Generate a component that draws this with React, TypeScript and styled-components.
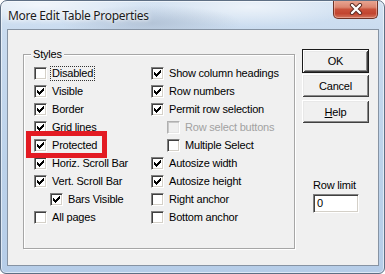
import React from "react";
import styled, { createGlobalStyle, css } from "styled-components";

const GlobalStyle = createGlobalStyle`
  html, body { margin: 0; padding: 0; background: #ffffff; }
  * { box-sizing: border-box; }
`;

const Window = styled.div`
  width: 385px;
  height: 274px;
  border: 1px solid #5e6f84;
  border-radius: 7px 7px 6px 6px;
  background:
    radial-gradient(ellipse 90px 18px at 150px 22px, rgba(160, 175, 195, 0.55), rgba(160, 175, 195, 0) 100%),
    radial-gradient(ellipse 120px 20px at 40px 4px, rgba(255, 255, 255, 0.7), rgba(255, 255, 255, 0) 100%),
    radial-gradient(ellipse 110px 20px at 250px 6px, rgba(255, 255, 255, 0.6), rgba(255, 255, 255, 0) 100%),
    linear-gradient(180deg, #d3e2f2 0%, #c9dbef 12%, #bcd2ea 60%, #b6cde8 100%);
  box-shadow: inset 0 0 0 1px rgba(255, 255, 255, 0.55);
  display: flex;
  flex-direction: column;
  overflow: hidden;
  font-family: "Liberation Sans", Arial, sans-serif;
`;

const TitleBar = styled.div`
  height: 28px;
  display: flex;
  align-items: flex-start;
  padding: 0 6px 0 7px;
`;

const Title = styled.div`
  font-family: "Noto Sans", "Open Sans", sans-serif;
  font-size: 12px;
  letter-spacing: -0.3px;
  line-height: 16px;
  margin-top: 7px;
  color: #1b1b1b;
  text-shadow: 0 0 6px rgba(255, 255, 255, 0.95), 0 0 3px rgba(255, 255, 255, 0.9);
`;

const CloseButton = styled.div`
  margin-left: auto;
  width: 45px;
  height: 19px;
  margin-top: -1px;
  border: 1px solid #6f3326;
  border-top: none;
  border-radius: 0 0 5px 5px;
  background: linear-gradient(
    180deg,
    #e9a996 0%,
    #dc8670 40%,
    #c9513a 52%,
    #c24530 75%,
    #d2755d 100%
  );
  box-shadow: inset 0 0 0 1px rgba(255, 210, 200, 0.45);
  display: flex;
  align-items: center;
  justify-content: center;
`;

const Client = styled.div`
  margin: 0 5px 0 6px;
  height: 237px;
  border: 1px solid #8693a3;
  background: #f0f0f0;
  display: flex;
  padding: 19px 0 0 15px;
  gap: 7px;
`;

const Group = styled.div`
  position: relative;
  width: 272px;
  height: 195px;
  margin-top: 5px;
  border: 1px solid #a6a6a6;
  box-shadow: 1px 1px 0 #ffffff, inset 1px 1px 0 #ffffff;
  padding: 9px 0 0 10px;
  display: grid;
  grid-template-columns: 117px 1fr;
`;

const Legend = styled.span`
  position: absolute;
  top: -7px;
  left: 7px;
  padding: 0 2px;
  background: #f0f0f0;
  font-size: 11px;
  line-height: 13px;
  letter-spacing: -0.2px;
  color: #000;
`;

const Column = styled.div`
  display: flex;
  flex-direction: column;
`;

const Row = styled.div<{ $indent?: boolean }>`
  height: 18px;
  display: flex;
  align-items: center;
  padding-left: ${(p) => (p.$indent ? "16px" : "0")};
`;

const Box = styled.div<{ $disabled?: boolean }>`
  width: 13px;
  height: 13px;
  flex: none;
  border: 1px solid;
  border-color: #808080 #ffffff #ffffff #808080;
  box-shadow: inset 1px 1px 0 #404040, inset -1px -1px 0 #d4d0c8;
  background: ${(p) => (p.$disabled ? "#f0f0f0" : "#ffffff")};
  display: flex;
  align-items: center;
  justify-content: center;
  ${(p) =>
    p.$disabled &&
    css`
      border-color: #b0b0b0 #ffffff #ffffff #b0b0b0;
      box-shadow: inset 1px 1px 0 #c8c8c8, inset -1px -1px 0 #e6e6e6;
    `}
`;

const Label = styled.span<{ $disabled?: boolean; $focus?: boolean }>`
  margin-left: 5px;
  font-size: 11px;
  line-height: 13px;
  letter-spacing: -0.2px;
  color: ${(p) => (p.$disabled ? "#a2a2a2" : "#000000")};
  white-space: nowrap;
  ${(p) =>
    p.$focus &&
    css`
      margin-left: 4px;
      padding: 0 1px;
      outline: 1px dotted #333;
      outline-offset: 0px;
    `}
`;

const Highlight = styled.div`
  position: absolute;
  left: 2px;
  top: 76px;
  width: 81px;
  height: 27px;
  border: 5px solid #e31b23;
  pointer-events: none;
`;

const SideColumn = styled.div`
  display: flex;
  flex-direction: column;
  width: 67px;
`;

const Button = styled.div<{ $default?: boolean; $gap?: number }>`
  height: ${(p) => (p.$default ? 24 : 23)}px;
  margin-top: ${(p) => p.$gap ?? 0}px;
  background: #f0f0f0;
  display: flex;
  align-items: center;
  justify-content: center;
  font-size: 11px;
  letter-spacing: -0.2px;
  color: #000;
  box-shadow: ${(p) =>
    p.$default
      ? "inset 0 0 0 1px #1a1a1a, inset 1px 1px 0 1px #ffffff, inset -1px -1px 0 1px #404040, inset 2px 2px 0 1px #e8e8e8, inset -2px -2px 0 1px #8a8a8a"
      : "inset 1px 1px 0 #ffffff, inset -1px -1px 0 #404040, inset 2px 2px 0 #e8e8e8, inset -2px -2px 0 #8a8a8a"};
`;

const Underline = styled.span`
  text-decoration: underline;
`;

const RowLimit = styled.div`
  margin: 56px 0 0 11px;
  display: flex;
  flex-direction: column;
  gap: 2px;
`;

const SmallText = styled.span`
  font-size: 11px;
  line-height: 13px;
  letter-spacing: -0.2px;
  color: #000;
`;

const Input = styled.div`
  width: 46px;
  height: 19px;
  border: 1px solid;
  border-color: #808080 #ffffff #ffffff #808080;
  box-shadow: inset 1px 1px 0 #404040, inset -1px -1px 0 #d4d0c8;
  background: #ffffff;
  padding: 0 0 0 3px;
  font-size: 11px;
  line-height: 17px;
  color: #000;
`;

const CheckMark: React.FC<{ color?: string }> = ({ color = "#000" }) => (
  <svg width="7" height="7" viewBox="0 0 7 7" shapeRendering="crispEdges">
    <g fill={color}>
      <rect x="6" y="0" width="1" height="3" />
      <rect x="5" y="1" width="1" height="3" />
      <rect x="4" y="2" width="1" height="3" />
      <rect x="3" y="3" width="1" height="3" />
      <rect x="2" y="4" width="1" height="3" />
      <rect x="1" y="3" width="1" height="3" />
      <rect x="0" y="2" width="1" height="3" />
    </g>
  </svg>
);

type Item = {
  label: string;
  checked?: boolean;
  disabled?: boolean;
  indent?: boolean;
  focus?: boolean;
};

const left: Item[] = [
  { label: "Disabled", focus: true },
  { label: "Visible", checked: true },
  { label: "Border", checked: true },
  { label: "Grid lines", checked: true },
  { label: "Protected", checked: true },
  { label: "Horiz. Scroll Bar", checked: true },
  { label: "Vert. Scroll Bar", checked: true },
  { label: "Bars Visible", checked: true, indent: true },
  { label: "All pages" },
];

const right: Item[] = [
  { label: "Show column headings", checked: true },
  { label: "Row numbers", checked: true },
  { label: "Permit row selection", checked: true },
  { label: "Row select buttons", disabled: true, indent: true },
  { label: "Multiple Select", indent: true },
  { label: "Autosize width", checked: true },
  { label: "Autosize height", checked: true },
  { label: "Right anchor" },
  { label: "Bottom anchor" },
];

const CheckRow: React.FC<{ item: Item }> = ({ item }) => (
  <Row $indent={item.indent}>
    <Box $disabled={item.disabled}>{item.checked && <CheckMark />}</Box>
    <Label $disabled={item.disabled} $focus={item.focus}>
      {item.label}
    </Label>
  </Row>
);

export default function App() {
  return (
    <>
      <GlobalStyle />
      <Window>
        <TitleBar>
          <Title>More Edit Table Properties</Title>
          <CloseButton>
            <svg width="14" height="12" viewBox="0 0 14 12">
              <path
                d="M3 2 L11 10 M11 2 L3 10"
                stroke="#5a2a22"
                strokeWidth="4.2"
                strokeLinecap="round"
              />
              <path
                d="M3 2 L11 10 M11 2 L3 10"
                stroke="#ffffff"
                strokeWidth="2.4"
                strokeLinecap="round"
              />
            </svg>
          </CloseButton>
        </TitleBar>
        <Client>
          <Group>
            <Legend>Styles</Legend>
            <Column>
              {left.map((it) => (
                <CheckRow key={it.label} item={it} />
              ))}
            </Column>
            <Column>
              {right.map((it) => (
                <CheckRow key={it.label} item={it} />
              ))}
            </Column>
            <Highlight />
          </Group>
          <SideColumn>
            <Button $default>OK</Button>
            <Button $gap={1}>Cancel</Button>
            <Button $gap={3}>
              <span>
                <Underline>H</Underline>elp
              </span>
            </Button>
            <RowLimit>
              <SmallText>Row limit</SmallText>
              <Input>0</Input>
            </RowLimit>
          </SideColumn>
        </Client>
      </Window>
    </>
  );
}
